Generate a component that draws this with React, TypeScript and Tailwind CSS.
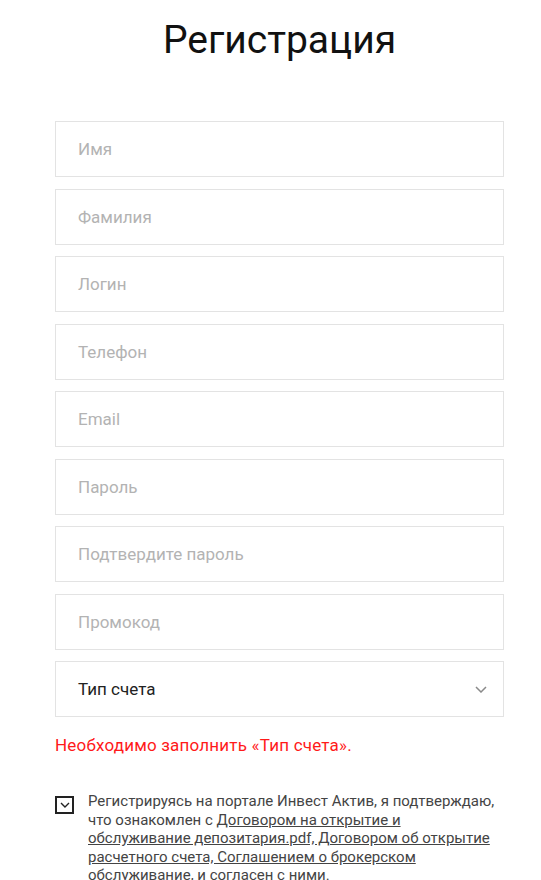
import React from "react";

const fields = ["Имя", "Фамилия", "Логин", "Телефон", "Email", "Пароль", "Подтвердите пароль", "Промокод"];

export default function App() {
  return (
    <div className="min-h-[880px] w-[541px] bg-white overflow-hidden" style={{ fontFamily: "Roboto, 'Noto Sans', sans-serif" }}>
      <div className="ml-[55px] w-[449px]">
        <h1 className="pt-[17px] text-center text-[39px] leading-[46px] font-normal text-[#111]">Регистрация</h1>
        <div className="mt-[58px] flex flex-col gap-[11.5px]">
          {fields.map((f) => (
            <div key={f} className="h-[56px] border border-[#e3e3e3] flex items-center pl-[22px] pt-[2px] text-[17px] text-[#b3b3b3]">
              {f}
            </div>
          ))}
          <div className="h-[56px] border border-[#e3e3e3] flex items-center justify-between pl-[22px] pr-[16px] text-[17px] text-[#222]">
            <span className="pt-[1px]">Тип счета</span>
            <svg width="12" height="7" viewBox="0 0 12 7" fill="none">
              <path d="M1 1l5 5 5-5" stroke="#8a8a8a" strokeWidth="1.5" />
            </svg>
          </div>
        </div>
        <div className="mt-[18px] text-[17px] leading-[20px] tracking-[0.2px] text-[#ff1a1a]">Необходимо заполнить «Тип счета».</div>
        <div className="mt-[38px] flex items-start">
          <div className="mt-[3px] w-[19px] h-[18px] border-2 border-[#222] flex items-center justify-center shrink-0">
            <svg width="10" height="6" viewBox="0 0 10 6" fill="none">
              <path d="M1 1l4 4 4-4" stroke="#222" strokeWidth="1.4" />
            </svg>
          </div>
          <p className="ml-[14px] -mt-[1px] text-[15px] leading-[18.5px] text-[#444]">
            Регистрируясь на портале Инвест Актив, я подтверждаю, что ознакомлен с{" "}
            <span className="underline">
              Договором на открытие и обслуживание депозитария.pdf, Договором об открытие расчетного счета, Соглашением о брокерском обслуживание
            </span>
            , и согласен с ними.
          </p>
        </div>
      </div>
    </div>
  );
}
